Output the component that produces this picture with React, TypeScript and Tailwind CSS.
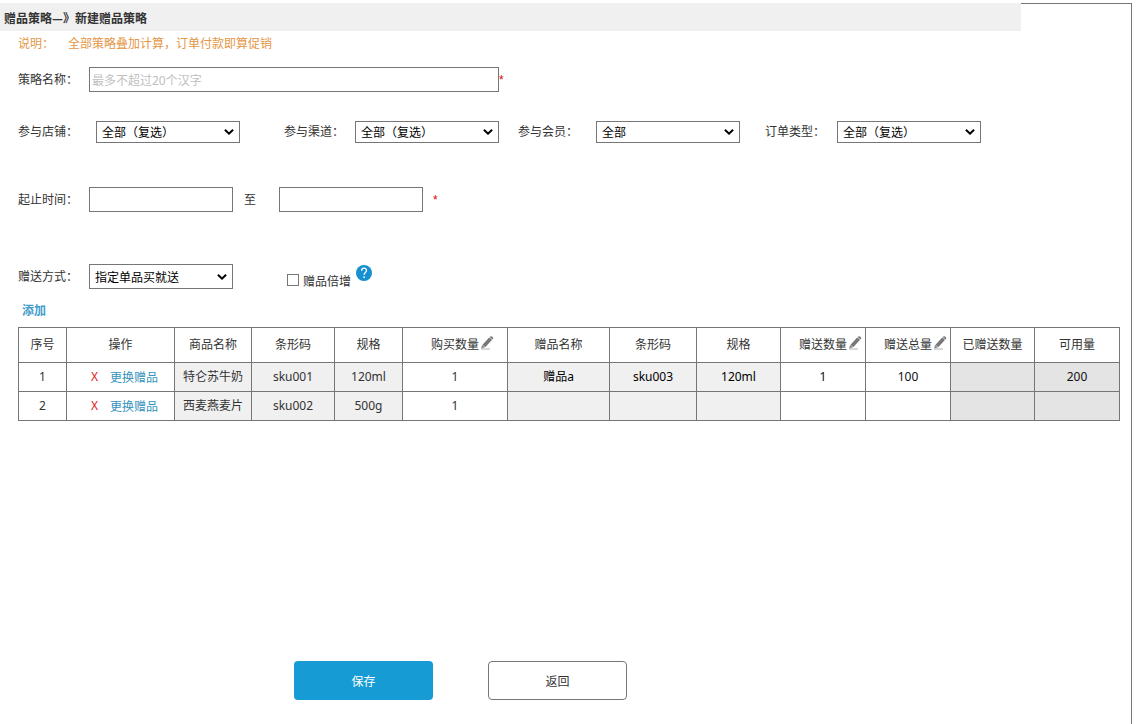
import type { ReactNode } from "react";

const options = {
  multi: ["全部（复选）"],
  single: ["全部"],
  method: ["指定单品买就送"],
};

function SelectBox({
  id,
  items,
  className,
}: {
  id: string;
  items: string[];
  className: string;
}) {
  return (
    <div className={`relative w-36 shrink-0 ${className}`}>
      <select
        id={id}
        className="block h-full w-full appearance-none border border-[#767676] bg-white pl-[5px] pr-5 pt-0.5 text-black outline-none"
      >
        {items.map((item) => (
          <option key={item}>{item}</option>
        ))}
      </select>
      <svg
        viewBox="0 0 10 7"
        className="pointer-events-none absolute right-1.5 top-1/2 h-[7px] w-2.5 -translate-y-1/2"
        fill="none"
        stroke="#000"
        strokeWidth="2"
      >
        <path d="M0.9 1.2 L5 5.2 L9.1 1.2" />
      </svg>
    </div>
  );
}

function PencilIcon() {
  return (
    <svg viewBox="0 0 14 14" className="h-3.5 w-3.5">
      <path d="M1 12.4 L2.2 8.8 L4.8 11.4 Z" fill="#8a8a8a" />
      <path d="M2.6 8.8 L9.2 1.4 L12 3.8 L5.2 11.2 Z" fill="#6f6f6f" />
      <path d="M9.6 1 Q11.2 -0.3 12.7 1 Q13.9 2.2 12.5 3.5 Z" fill="#7c7c7c" />
      <path d="M4.2 9.6 L10.4 2.8" stroke="#9a9a9a" strokeWidth="0.6" />
      <path d="M1 13 H10" stroke="#a0a0a0" strokeWidth="0.8" />
    </svg>
  );
}

const columns: { title: string; width: string; editable?: boolean }[] = [
  { title: "序号", width: "w-[48px]" },
  { title: "操作", width: "w-[108px]" },
  { title: "商品名称", width: "w-[77px]" },
  { title: "条形码", width: "w-[83px]" },
  { title: "规格", width: "w-[68px]" },
  { title: "购买数量", width: "w-[105px]", editable: true },
  { title: "赠品名称", width: "w-[102px]" },
  { title: "条形码", width: "w-[87px]" },
  { title: "规格", width: "w-[84px]" },
  { title: "赠送数量", width: "w-[85px]", editable: true },
  { title: "赠送总量", width: "w-[85px]", editable: true },
  { title: "已赠送数量", width: "w-[84px]" },
  { title: "可用量", width: "w-[85px]" },
];

const rows = [
  {
    product: ["特仑苏牛奶", "sku001", "120ml"],
    buy: "1",
    gift: ["赠品a", "sku003", "120ml"],
    give: ["1", "100"],
    stock: ["", "200"],
  },
  {
    product: ["西麦燕麦片", "sku002", "500g"],
    buy: "1",
    gift: ["", "", ""],
    give: ["", ""],
    stock: ["", ""],
  },
];

function Cell({ className = "", children }: { className?: string; children?: ReactNode }) {
  return (
    <td className={`h-[29px] border border-[#767676] p-0 ${className}`}>{children}</td>
  );
}

const inputClass = "h-[25px] border border-[#767676] bg-white px-0.5 pt-0.5 text-black outline-none";

export default function App() {
  return (
    <div className="min-h-screen bg-white pr-[9px] pt-[3px] font-['Noto_Sans','Noto_Sans_CJK_SC',sans-serif] text-xs text-[#333]">
      <main className="min-h-[calc(100vh-3px)] border-r border-t border-[#767676] pb-6">
        <h1 className="-mt-px mr-[110px] flex h-7 items-center bg-[#f0f0f0] pl-1 pt-0.5 font-['Noto_Sans_CJK_SC',sans-serif] font-bold">
          赠品策略—》新建赠品策略
        </h1>

        <form className="pl-[18px] pr-[11px]" onSubmit={(e) => e.preventDefault()}>
          <p className="flex h-[26px] items-center text-[#e49645]">
            <span className="w-[50px]">说明：</span>
            <span>全部策略叠加计算，订单付款即算促销</span>
          </p>

          <div className="mt-2.5 flex h-[25px] items-center">
            <label htmlFor="name" className="w-[71px] shrink-0">
              策略名称：
            </label>
            <input
              id="name"
              type="text"
              placeholder="最多不超过20个汉字"
              className={`${inputClass} w-[410px] placeholder:text-[#c0c0c0]`}
            />
            <span className="font-['Liberation_Sans',sans-serif] text-[#e00000]">*</span>
          </div>

          <div className="mt-[29px] flex items-center">
            <label htmlFor="shop" className="w-[78px] shrink-0">
              参与店铺：
            </label>
            <SelectBox id="shop" items={options.multi} className="h-[22px]" />
            <label htmlFor="channel" className="ml-11 w-[71px] shrink-0">
              参与渠道：
            </label>
            <SelectBox id="channel" items={options.multi} className="h-[22px]" />
            <label htmlFor="member" className="ml-[19px] w-[78px] shrink-0">
              参与会员：
            </label>
            <SelectBox id="member" items={options.single} className="h-[22px]" />
            <label htmlFor="order" className="ml-[25px] w-[72px] shrink-0">
              订单类型：
            </label>
            <SelectBox id="order" items={options.multi} className="h-[22px]" />
          </div>

          <div className="mt-11 flex h-[25px] items-center">
            <label htmlFor="start" className="w-[71px] shrink-0">
              起止时间：
            </label>
            <input id="start" type="text" className={`${inputClass} w-36`} />
            <label htmlFor="end" className="w-[46px] pl-[11px]">
              至
            </label>
            <input id="end" type="text" className={`${inputClass} w-36`} />
            <span className="ml-2.5 font-['Liberation_Sans',sans-serif] text-[#e00000]">*</span>
          </div>

          <div className="mt-[52px] flex h-[25px] items-center">
            <label htmlFor="method" className="w-[71px] shrink-0">
              赠送方式：
            </label>
            <SelectBox id="method" items={options.method} className="h-[25px]" />
            <div className="ml-[54px] flex items-center gap-1 pt-1.5">
              <input
                id="double"
                type="checkbox"
                className="h-3 w-3 appearance-none border border-[#767676] bg-white checked:bg-[#169bd5]"
              />
              <label htmlFor="double" className="pt-1">
                赠品倍增
              </label>
            </div>
            <button
              type="button"
              aria-label="帮助"
              className="mb-2 ml-[5px] flex h-4 w-4 items-center justify-center rounded-full bg-[#1590d0] text-white"
            >
              <svg viewBox="0 0 16 16" className="h-4 w-4" fill="none" stroke="#fff">
                <path
                  d="M5.6 5.7 C5.6 2.3 10.6 2.4 10.5 5.5 C10.5 7.5 8.1 7.5 8.1 9.8"
                  strokeWidth="1.3"
                />
                <circle cx="8.1" cy="12.2" r="0.85" fill="#fff" stroke="none" />
              </svg>
            </button>
          </div>

          <button
            type="button"
            className="ml-1 mt-2.5 flex h-6 items-center font-bold text-[#3f9ccb]"
          >
            添加
          </button>

          <table className="mt-1 w-full table-fixed border-collapse text-center">
            <colgroup>
              {columns.map((c, i) => (
                <col key={i} className={c.width} />
              ))}
            </colgroup>
            <thead>
              <tr>
                {columns.map((c, i) => (
                  <th key={i} className="h-[35px] border border-[#767676] p-0 font-normal">
                    <span className="relative whitespace-nowrap">
                      {c.title}
                      {c.editable && (
                        <span className="absolute left-full top-0 pl-px">
                          <PencilIcon />
                        </span>
                      )}
                    </span>
                  </th>
                ))}
              </tr>
            </thead>
            <tbody>
              {rows.map((r, i) => (
                <tr key={i}>
                  <Cell>{i + 1}</Cell>
                  <Cell>
                    <div className="flex items-center justify-center gap-3 pl-2">
                      <button type="button" aria-label="删除" className="text-[#e02020]">
                        X
                      </button>
                      <a href="#gift" className="pt-0.5 text-[#3593bd]">
                        更换赠品
                      </a>
                    </div>
                  </Cell>
                  {r.product.map((v, j) => (
                    <Cell key={j} className="bg-[#f0f0f0]">
                      {v}
                    </Cell>
                  ))}
                  <Cell>{r.buy}</Cell>
                  {r.gift.map((v, j) => (
                    <Cell key={j} className="bg-[#f0f0f0] text-black">
                      {v}
                    </Cell>
                  ))}
                  {r.give.map((v, j) => (
                    <Cell key={j} className="text-[#111]">
                      {v}
                    </Cell>
                  ))}
                  {r.stock.map((v, j) => (
                    <Cell key={j} className="bg-[#e4e4e4] text-[#111]">
                      {v}
                    </Cell>
                  ))}
                </tr>
              ))}
            </tbody>
          </table>

          <div className="ml-[276px] mt-60 flex gap-[55px]">
            <button type="submit" className="h-[39px] w-[139px] rounded bg-[#169bd5] pt-0.5 text-white">
              保存
            </button>
            <button
              type="button"
              className="h-[39px] w-[139px] rounded border border-[#767676] bg-white pt-0.5"
            >
              返回
            </button>
          </div>
        </form>
      </main>
    </div>
  );
}
